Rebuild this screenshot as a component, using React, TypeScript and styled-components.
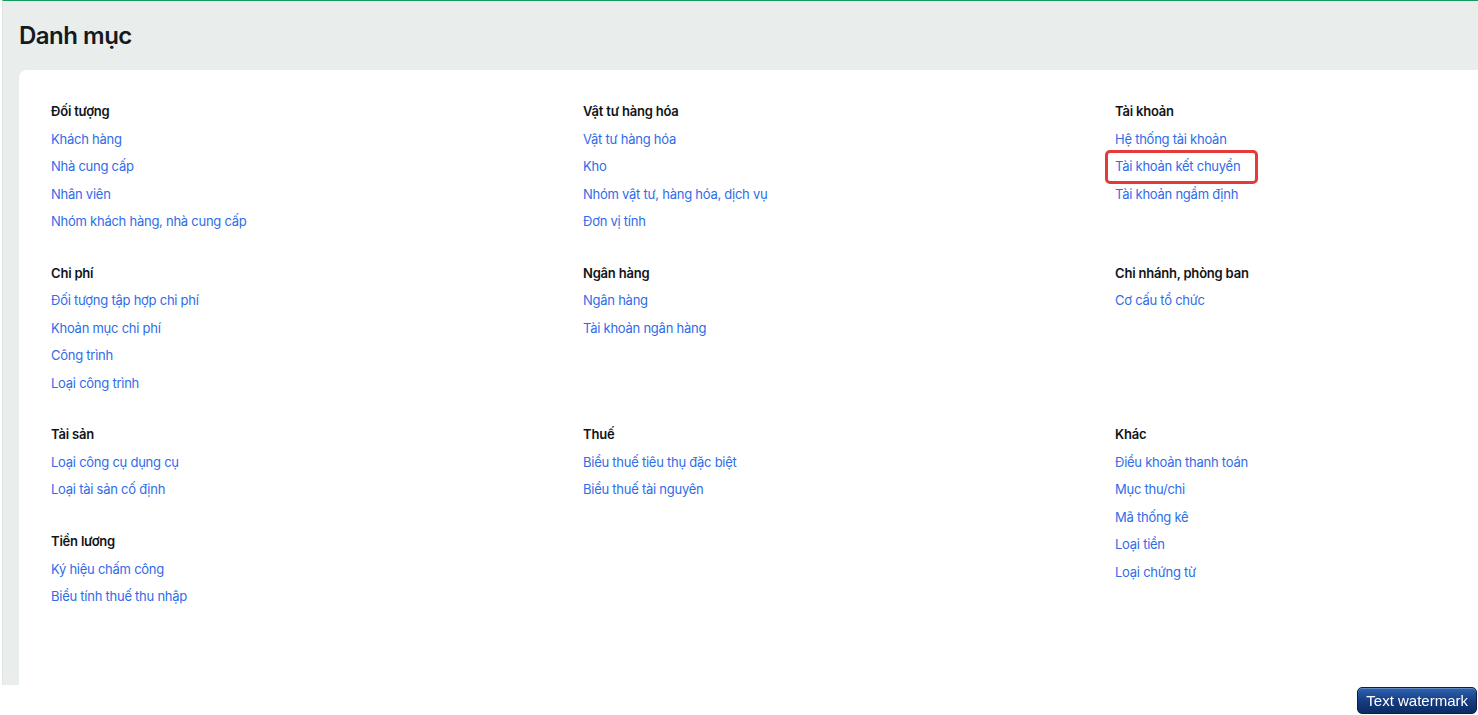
import React from 'react';
import styled, { createGlobalStyle, css } from 'styled-components';

interface CategoryGroup {
  title: string;
  items: string[];
}

const GlobalStyle = createGlobalStyle`
  html, body {
    margin: 0;
    padding: 0;
    background: #ffffff;
    font-family: Inter, "Noto Sans", "Liberation Sans", sans-serif;
    overflow: hidden;
  }
  * {
    box-sizing: border-box;
  }
`;

const Page = styled.div`
  height: 685px;
  margin-left: 2px;
  border-top: 1px solid #139a5c;
  border-left: 1px solid #e1e6e4;
  background: #e9eeed;
  display: flex;
  flex-direction: column;
  overflow: hidden;
`;

const PageHeader = styled.header`
  padding: 19px 16px 18px;
`;

const PageTitle = styled.h1`
  margin: 0;
  font-size: 24px;
  line-height: 32px;
  font-weight: 600;
  letter-spacing: -0.5px;
  color: #151a1e;
`;

const Card = styled.main`
  flex: 1;
  margin-left: 16px;
  background: #ffffff;
  border-radius: 8px 0 0 0;
  padding: 31px 0 0 32px;
  display: flex;
  flex-direction: column;
  gap: 27px;
`;

const Row = styled.div`
  display: grid;
  grid-template-columns: repeat(3, 532px);
`;

// column with more than one group sharing a row cell
const Stack = styled.div`
  display: flex;
  flex-direction: column;
  gap: 27.5px;
`;

const Group = styled.section`
  display: flex;
  flex-direction: column;
  align-items: flex-start;
`;

const GroupTitle = styled.h3`
  margin: 0 0 4.5px;
  font-size: 13px;
  line-height: 20px;
  font-weight: 600;
  letter-spacing: -0.2px;
  color: #111418;
`;

const LinkItem = styled.a<{ $highlighted?: boolean }>`
  position: relative;
  display: inline-block;
  font-size: 13px;
  line-height: 27.5px;
  letter-spacing: -0.25px;
  color: #2f6ce8;
  text-decoration: none;
  cursor: pointer;

  ${({ $highlighted }) =>
    $highlighted &&
    css`
      &::after {
        content: '';
        position: absolute;
        left: -10px;
        right: -18px;
        top: -3px;
        bottom: -3px;
        border: 3px solid #e43a3a;
        border-radius: 5px;
      }
    `}
`;

const Watermark = styled.div`
  position: fixed;
  right: 1px;
  bottom: 1px;
  height: 27px;
  padding: 0 8px;
  display: flex;
  align-items: center;
  border: 1px solid #0b1f45;
  border-radius: 5px;
  background: linear-gradient(#2f63b0, #143b7e 55%, #0c2b63);
  color: #ffffff;
  font-family: "Liberation Sans", Arial, sans-serif;
  font-size: 15px;
  box-shadow: inset 0 1px 0 rgba(255, 255, 255, 0.25);
`;

const HIGHLIGHTED = 'Tài khoản kết chuyển';

const rows: (CategoryGroup | CategoryGroup[])[][] = [
  [
    { title: 'Đối tượng', items: ['Khách hàng', 'Nhà cung cấp', 'Nhân viên', 'Nhóm khách hàng, nhà cung cấp'] },
    { title: 'Vật tư hàng hóa', items: ['Vật tư hàng hóa', 'Kho', 'Nhóm vật tư, hàng hóa, dịch vụ', 'Đơn vị tính'] },
    { title: 'Tài khoản', items: ['Hệ thống tài khoản', 'Tài khoản kết chuyển', 'Tài khoản ngầm định'] },
  ],
  [
    { title: 'Chi phí', items: ['Đối tượng tập hợp chi phí', 'Khoản mục chi phí', 'Công trình', 'Loại công trình'] },
    { title: 'Ngân hàng', items: ['Ngân hàng', 'Tài khoản ngân hàng'] },
    { title: 'Chi nhánh, phòng ban', items: ['Cơ cấu tổ chức'] },
  ],
  [
    [
      { title: 'Tài sản', items: ['Loại công cụ dụng cụ', 'Loại tài sản cố định'] },
      { title: 'Tiền lương', items: ['Ký hiệu chấm công', 'Biểu tính thuế thu nhập'] },
    ],
    { title: 'Thuế', items: ['Biểu thuế tiêu thụ đặc biệt', 'Biểu thuế tài nguyên'] },
    { title: 'Khác', items: ['Điều khoản thanh toán', 'Mục thu/chi', 'Mã thống kê', 'Loại tiền', 'Loại chứng từ'] },
  ],
];

const GroupBlock: React.FC<{ group: CategoryGroup }> = ({ group }) => (
  <Group>
    <GroupTitle>{group.title}</GroupTitle>
    {group.items.map((item) => (
      <LinkItem key={item} $highlighted={item === HIGHLIGHTED}>
        {item}
      </LinkItem>
    ))}
  </Group>
);

export default function App() {
  return (
    <>
      <GlobalStyle />
      <Page>
        <PageHeader>
          <PageTitle>Danh mục</PageTitle>
        </PageHeader>
        <Card>
          {rows.map((row, i) => (
            <Row key={i}>
              {row.map((cell, j) =>
                Array.isArray(cell) ? (
                  <Stack key={j}>
                    {cell.map((g) => (
                      <GroupBlock key={g.title} group={g} />
                    ))}
                  </Stack>
                ) : (
                  <GroupBlock key={j} group={cell} />
                )
              )}
            </Row>
          ))}
        </Card>
      </Page>
      <Watermark>Text watermark</Watermark>
    </>
  );
}
